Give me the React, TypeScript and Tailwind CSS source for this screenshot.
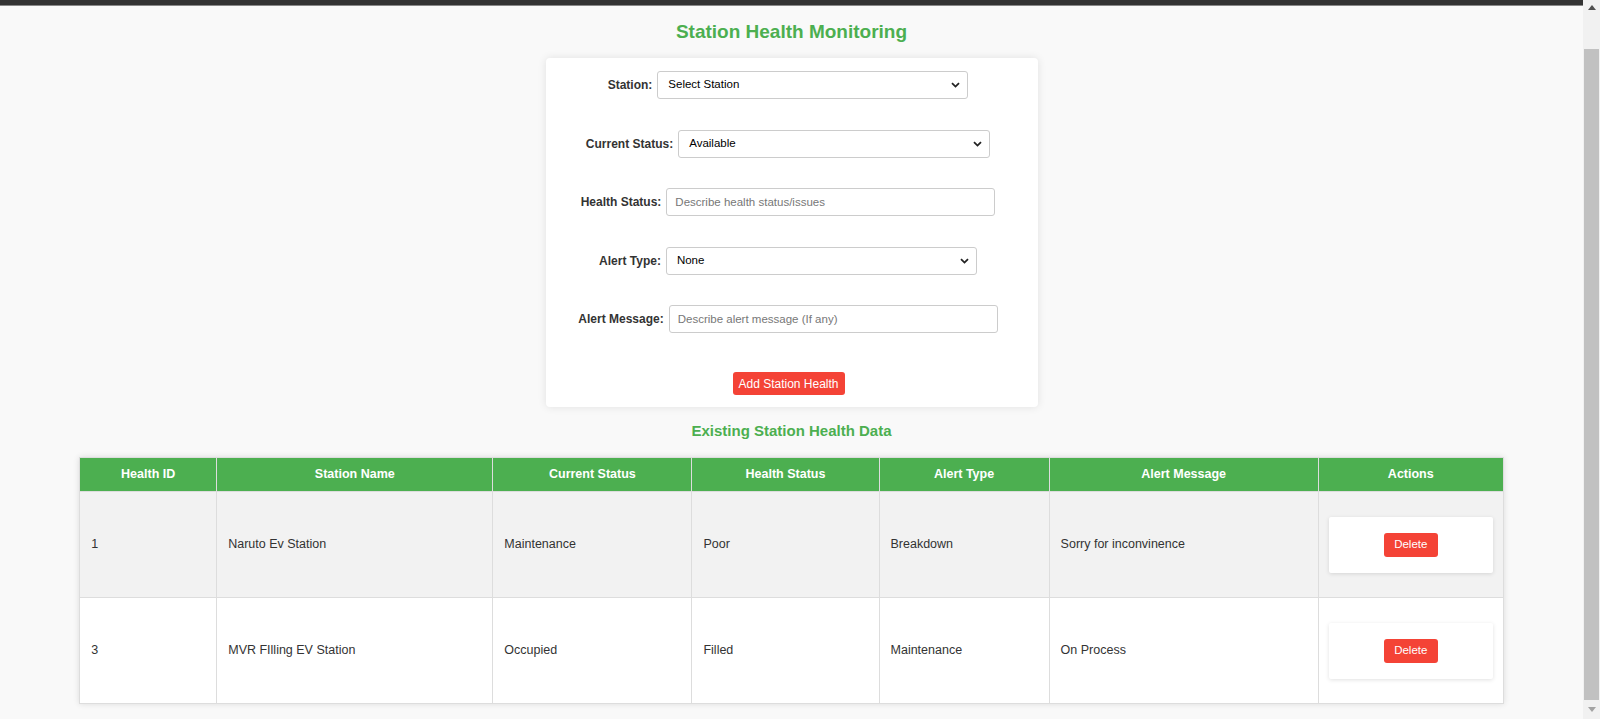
import React from "react";

const rows = [
    {
        id: "1",
        station: "Naruto Ev Station",
        current: "Maintenance",
        health: "Poor",
        alertType: "Breakdown",
        message: "Sorry for inconvinence",
    },
    {
        id: "3",
        station: "MVR FIlling EV Station",
        current: "Occupied",
        health: "Filled",
        alertType: "Maintenance",
        message: "On Process",
    },
];

const colWidths = [137, 276, 199, 187, 170, 269, 185];
const headers = [
    "Health ID",
    "Station Name",
    "Current Status",
    "Health Status",
    "Alert Type",
    "Alert Message",
    "Actions",
];

function Chevron() {
    return (
        <svg
            width="9"
            height="6"
            viewBox="0 0 9 6"
            className="absolute right-[7px] top-1/2 -translate-y-1/2 pointer-events-none"
        >
            <path d="M1 1.2 L4.5 4.6 L8 1.2" fill="none" stroke="#222" strokeWidth="1.8" />
        </svg>
    );
}

function SelectRow({ label, value, width }: { label: string; value: string; width: number }) {
    return (
        <div className="flex items-center justify-center gap-[5px] pr-[7px] h-[28px]">
            <span className="text-[12px] font-bold text-[#333]">{label}</span>
            <div
                className="relative h-[28px] rounded-[3px] border border-[#ccc] bg-white flex items-center pl-[10px] text-[11.5px] text-black"
                style={{ width }}
            >
                {value}
                <Chevron />
            </div>
        </div>
    );
}

function InputRow({ label, placeholder, width }: { label: string; placeholder: string; width: number }) {
    return (
        <div className="flex items-center justify-center gap-[5px] pr-[7px] h-[28px]">
            <span className="text-[12px] font-bold text-[#333]">{label}</span>
            <input
                placeholder={placeholder}
                className="h-[28px] rounded-[3px] border border-[#ccc] bg-white px-[8px] text-[11.5px] placeholder:text-[#777] outline-none"
                style={{ width }}
            />
        </div>
    );
}

export default function App() {
    return (
        <div className="flex h-[719px] w-full overflow-hidden bg-[#f9f9f9] font-['Liberation_Sans',Arial,sans-serif]">
            <div className="flex-1 flex flex-col">
                <div className="h-[6px] bg-[#333] border-b border-[#888]" />

                <h1 className="mt-[14px] text-center text-[19px] leading-[24px] font-bold text-[#4caf50]">
                    Station Health Monitoring
                </h1>

                <div className="mx-auto mt-[14px] w-[492px] bg-white rounded-[4px] shadow-[0_0_8px_rgba(0,0,0,0.1)] pt-[13px] pb-[12px]">
                    <div className="flex flex-col gap-[30.5px]">
                        <SelectRow label="Station:" value="Select Station" width={311} />
                        <SelectRow label="Current Status:" value="Available" width={312} />
                        <InputRow label="Health Status:" placeholder="Describe health status/issues" width={329} />
                        <SelectRow label="Alert Type:" value="None" width={311} />
                        <InputRow label="Alert Message:" placeholder="Describe alert message (If any)" width={329} />
                    </div>
                    <div className="mt-[39px] flex justify-center pr-[6px]">
                        <button className="h-[23px] w-[112px] rounded-[3px] bg-[#f44336] text-[12px] text-white">
                            Add Station Health
                        </button>
                    </div>
                </div>

                <h2 className="mt-[14px] text-center text-[15px] leading-[20px] font-bold text-[#4caf50]">
                    Existing Station Health Data
                </h2>

                <table className="mt-[16px] mx-auto w-[90%] table-fixed border-collapse bg-white shadow-[0_0_6px_rgba(0,0,0,0.12)] text-[12.5px] text-[#333]">
                    <colgroup>
                        {colWidths.map((w, i) => (
                            <col key={i} style={{ width: w }} />
                        ))}
                    </colgroup>
                    <thead>
                        <tr className="h-[34px] bg-[#4caf50] text-white">
                            {headers.map((h) => (
                                <th key={h} className="border border-[#ddd] font-bold text-[12.5px] text-center">
                                    {h}
                                </th>
                            ))}
                        </tr>
                    </thead>
                    <tbody>
                        {rows.map((r, i) => (
                            <tr key={r.id} className={i % 2 === 0 ? "h-[106px] bg-[#f2f2f2]" : "h-[106px] bg-white"}>
                                <td className="border border-[#ddd] px-[11px]">{r.id}</td>
                                <td className="border border-[#ddd] px-[11px]">{r.station}</td>
                                <td className="border border-[#ddd] px-[11px]">{r.current}</td>
                                <td className="border border-[#ddd] px-[11px]">{r.health}</td>
                                <td className="border border-[#ddd] px-[11px]">{r.alertType}</td>
                                <td className="border border-[#ddd] px-[11px]">{r.message}</td>
                                <td className="border border-[#ddd] px-[10px]">
                                    <div className="h-[56px] bg-white rounded-[2px] shadow-[0_1px_4px_rgba(0,0,0,0.12)] flex items-center justify-center">
                                        <button className="h-[24px] w-[54px] rounded-[3px] bg-[#f44336] text-[11.5px] text-white">
                                            Delete
                                        </button>
                                    </div>
                                </td>
                            </tr>
                        ))}
                    </tbody>
                </table>
            </div>

            <div className="w-[17px] bg-[#f1f1f1] flex flex-col items-center">
                <div className="h-[14px] flex items-center justify-center">
                    <svg width="8" height="5" viewBox="0 0 8 5">
                        <path d="M0 5 L4 0 L8 5 Z" fill="#505050" />
                    </svg>
                </div>
                <div className="mt-[35px] h-[651px] w-[15px] bg-[#c1c1c1]" />
                <div className="flex-1 flex items-center justify-center">
                    <svg width="8" height="5" viewBox="0 0 8 5">
                        <path d="M0 0 L8 0 L4 5 Z" fill="#a3a3a3" />
                    </svg>
                </div>
            </div>
        </div>
    );
}
